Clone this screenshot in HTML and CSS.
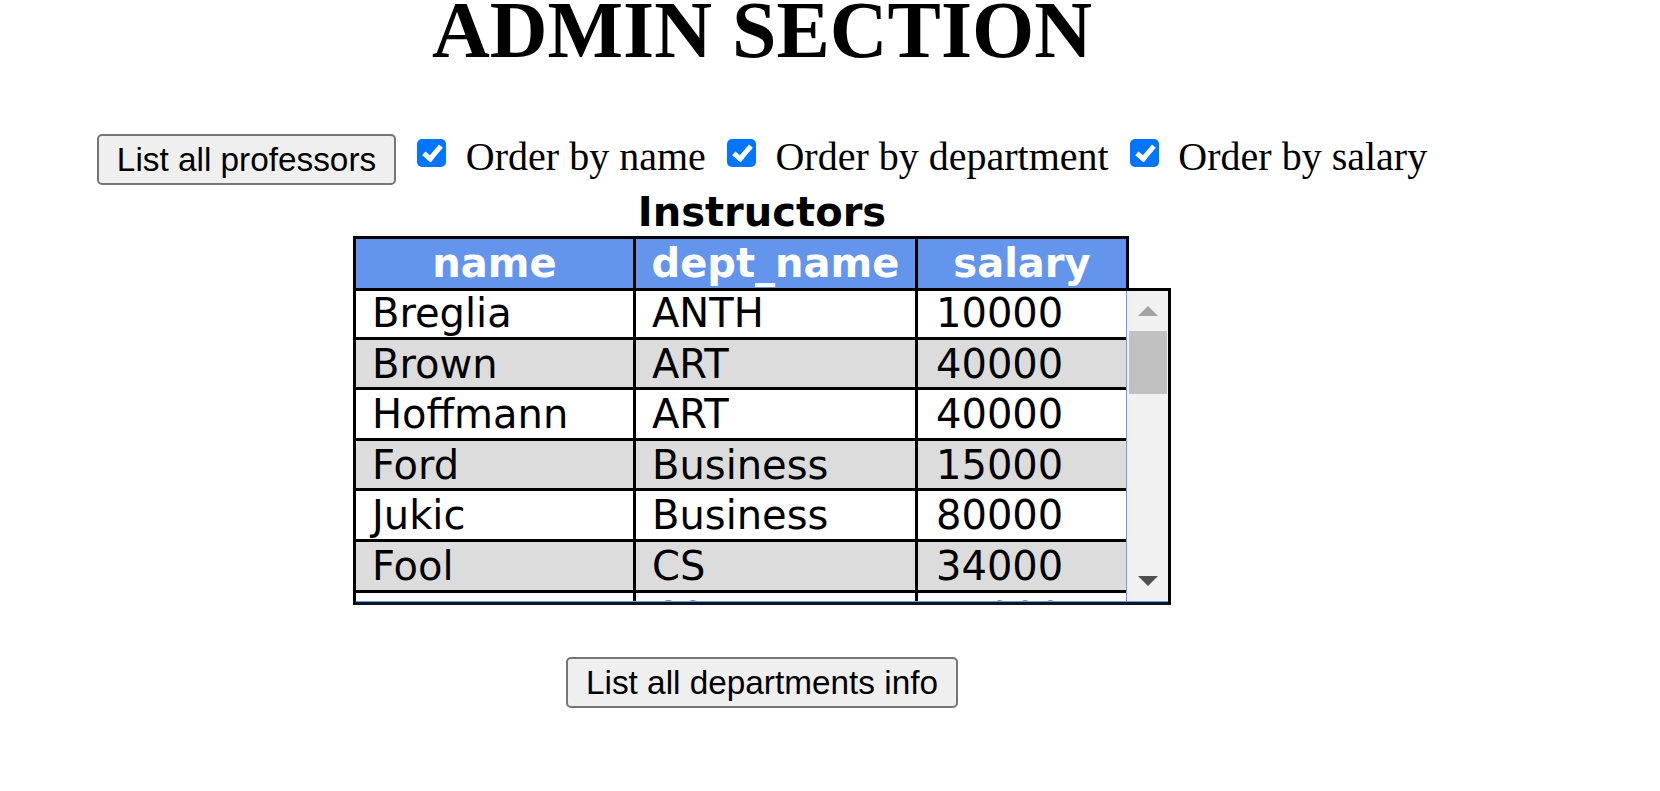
FILE: index.html
```html
<!DOCTYPE html>
<html lang="en">
<head>
<meta charset="utf-8">
<title>Admin Section</title>
<link rel="stylesheet" href="styles.css">
</head>
<body>
<div class="page">
  <h1 class="title">ADMIN SECTION</h1>

  <form class="controls">
    <button type="button" class="btn">List all professors</button>
    <label class="opt"><input type="checkbox" class="check" checked><span class="opt-text">Order by name</span></label>
    <label class="opt"><input type="checkbox" class="check" checked><span class="opt-text">Order by department</span></label>
    <label class="opt"><input type="checkbox" class="check" checked><span class="opt-text">Order by salary</span></label>
  </form>

  <div class="instructors">
    <div class="caption">Instructors</div>
    <table class="head-table">
      <tr>
        <th class="c1">name</th>
        <th class="c2">dept_name</th>
        <th class="c3">salary</th>
      </tr>
    </table>
    <div class="scroll-box">
      <div class="viewport">
        <table class="body-table">
          <tr><td class="c1">Breglia</td><td class="c2">ANTH</td><td class="c3">10000</td></tr>
          <tr><td class="c1">Brown</td><td class="c2">ART</td><td class="c3">40000</td></tr>
          <tr><td class="c1">Hoffmann</td><td class="c2">ART</td><td class="c3">40000</td></tr>
          <tr><td class="c1">Ford</td><td class="c2">Business</td><td class="c3">15000</td></tr>
          <tr><td class="c1">Jukic</td><td class="c2">Business</td><td class="c3">80000</td></tr>
          <tr><td class="c1">Fool</td><td class="c2">CS</td><td class="c3">34000</td></tr>
          <tr><td class="c1">Katz</td><td class="c2">CS</td><td class="c3">75000</td></tr>
          <tr><td class="c1">Srinivasan</td><td class="c2">CS</td><td class="c3">65000</td></tr>
          <tr><td class="c1">Brandt</td><td class="c2">CS</td><td class="c3">92000</td></tr>
          <tr><td class="c1">Kim</td><td class="c2">EE</td><td class="c3">80000</td></tr>
          <tr><td class="c1">Wu</td><td class="c2">Finance</td><td class="c3">90000</td></tr>
          <tr><td class="c1">Singh</td><td class="c2">Finance</td><td class="c3">80000</td></tr>
          <tr><td class="c1">El Said</td><td class="c2">History</td><td class="c3">60000</td></tr>
          <tr><td class="c1">Califieri</td><td class="c2">History</td><td class="c3">62000</td></tr>
          <tr><td class="c1">Mozart</td><td class="c2">Music</td><td class="c3">40000</td></tr>
          <tr><td class="c1">Einstein</td><td class="c2">Physics</td><td class="c3">95000</td></tr>
          <tr><td class="c1">Gold</td><td class="c2">Physics</td><td class="c3">87000</td></tr>
          <tr><td class="c1">Crick</td><td class="c2">Biology</td><td class="c3">72000</td></tr>
        </table>
      </div>
      <div class="scrollbar">
        <div class="sb-btn"><span class="arrow-up"></span></div>
        <div class="sb-track"><div class="sb-thumb"></div></div>
        <div class="sb-btn"><span class="arrow-down"></span></div>
      </div>
    </div>
  </div>

  <div class="bottom">
    <button type="button" class="btn">List all departments info</button>
  </div>
</div>
</body>
</html>
```

FILE: styles.css
```css
html, body {
  margin: 0;
  padding: 0;
  background: #fff;
  color: #000;
}

.page {
  width: 1524px;
}

.title {
  margin: 0;
  font: bold 80px/60px "Liberation Serif", "Times New Roman", serif;
  text-align: center;
}

.controls {
  display: flex;
  justify-content: center;
  align-items: flex-start;
  margin: 74px 0 0;
  height: 51px;
}

.btn {
  box-sizing: border-box;
  height: 51px;
  padding: 0 18px;
  border: 2px solid #767676;
  border-radius: 5px;
  background: #efefef;
  color: #000;
  font: 33.33px/47px "Liberation Sans", Arial, sans-serif;
  white-space: nowrap;
}

.opt {
  display: flex;
  align-items: flex-start;
  margin-left: 21px;
}

.check {
  appearance: none;
  -webkit-appearance: none;
  position: relative;
  flex: none;
  width: 29px;
  height: 28px;
  margin: 5px 0 0;
  border-radius: 5px;
  background: #0075ff;
}

.check::after {
  content: "";
  position: absolute;
  left: 10px;
  top: 3px;
  width: 6px;
  height: 14px;
  border: solid #fff;
  border-width: 0 5px 5px 0;
  transform: rotate(40deg);
}

.opt-text {
  margin-left: 19.7px;
  font: 40px/46px "Liberation Serif", "Times New Roman", serif;
  white-space: nowrap;
}

.instructors {
  width: 818px;
  margin: 3px auto 0;
}

.caption {
  padding-top: 1px;
  font: bold 40px/47px "DejaVu Sans", Verdana, sans-serif;
  text-align: center;
}

.head-table {
  width: 776px;
  table-layout: fixed;
  border-collapse: separate;
  border-spacing: 0;
  border-top: 3px solid #000;
  border-left: 3px solid #000;
  background: #6495ed;
}

.head-table th {
  box-sizing: border-box;
  padding: 0;
  border-right: 3px solid #000;
  color: #fff;
  font: bold 40px/49px "DejaVu Sans", Verdana, sans-serif;
  text-align: center;
  white-space: nowrap;
}

.head-table .c1 { width: 280px; }
.head-table .c2 { width: 282px; }
.head-table .c3 { width: 211px; }

.scroll-box {
  display: flex;
  box-sizing: border-box;
  width: 818px;
  border: 3px solid #000;
  border-bottom-color: #0d1526;
}

.viewport {
  box-sizing: border-box;
  width: 771px;
  height: 311px;
  overflow: hidden;
  border-right: 1px solid #6f98e8;
  border-bottom: 1px solid #6f98e8;
}

.body-table {
  width: 770px;
  margin-top: -2px;
  table-layout: fixed;
  border-collapse: separate;
  border-spacing: 0;
}

.body-table td {
  box-sizing: border-box;
  padding: 2px 0 0 16px;
  border-right: 3px solid #000;
  border-bottom: 3px solid #000;
  background: #fff;
  font: 40px/45.6px "DejaVu Sans", Verdana, sans-serif;
  white-space: nowrap;
}

.body-table tr:nth-child(even) td {
  background: #dcdcdc;
}

.body-table .c1 { width: 280px; }
.body-table .c2 { width: 282px; }
.body-table .c3 { width: 208px; border-right: none; padding-left: 18px; }

.scrollbar {
  box-sizing: border-box;
  display: flex;
  flex-direction: column;
  width: 41px;
  height: 311px;
  background: #f1f1f1;
  border-bottom: 1px solid #6f98e8;
}

.sb-btn {
  display: flex;
  align-items: center;
  justify-content: center;
  height: 40px;
  flex: none;
}

.sb-track {
  flex: 1;
}

.sb-thumb {
  height: 63px;
  margin: 0 1px 0 2px;
  background: #c1c1c1;
}

.arrow-up {
  width: 0;
  height: 0;
  border-left: 10px solid transparent;
  border-right: 10px solid transparent;
  border-bottom: 10px solid #a3a3a3;
}

.arrow-down {
  width: 0;
  height: 0;
  border-left: 10px solid transparent;
  border-right: 10px solid transparent;
  border-top: 10px solid #505050;
}

.bottom {
  display: flex;
  justify-content: center;
  margin-top: 52px;
}
```
